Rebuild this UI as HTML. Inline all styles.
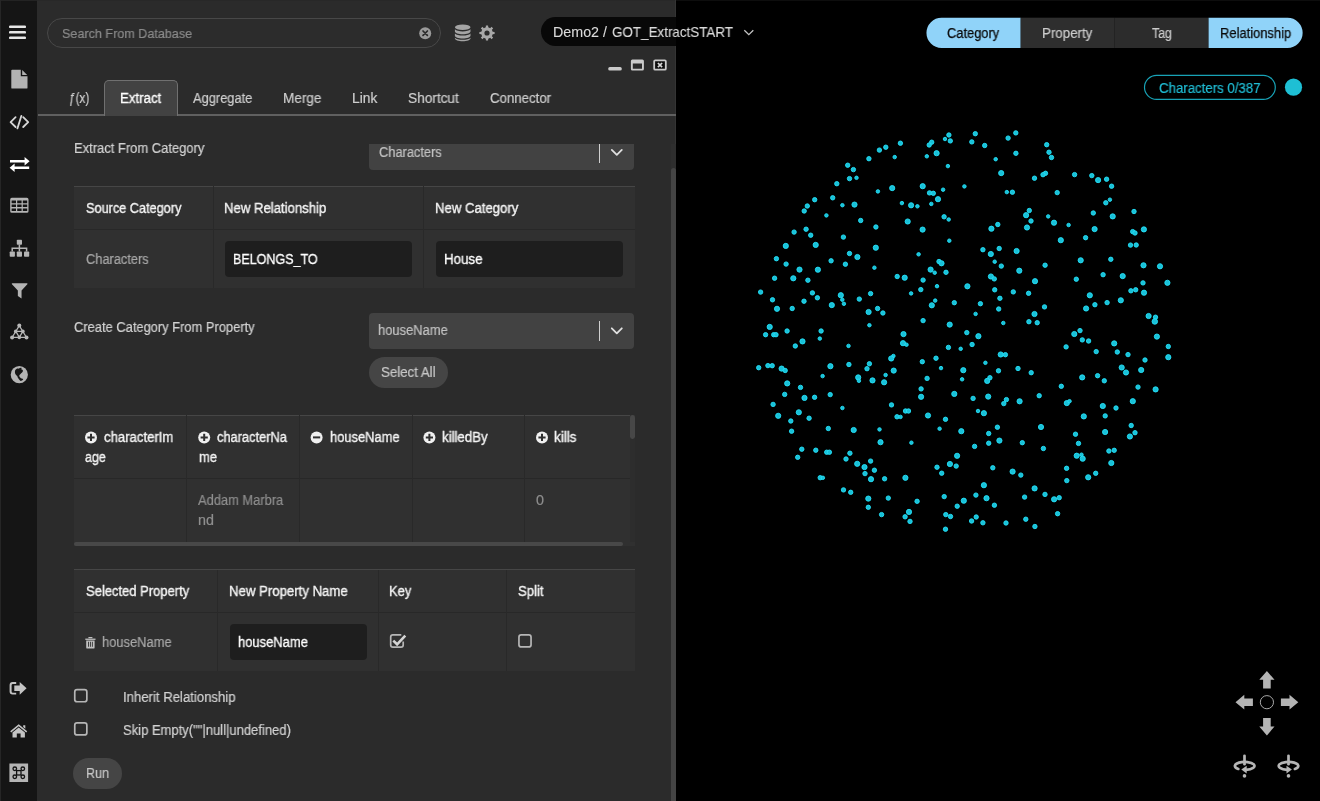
<!DOCTYPE html>
<html lang="en">
<head>
<meta charset="utf-8">
<title>Extract</title>
<style>
*{box-sizing:border-box;margin:0;padding:0}
html,body{width:1320px;height:801px;overflow:hidden;background:#000;}
body{position:relative;font-family:"Liberation Sans",sans-serif;font-size:13px;color:#d4d4d4;}
.abs{position:absolute}
.t{position:absolute;white-space:nowrap;line-height:16px;font-size:13px;-webkit-text-stroke:0.2px currentColor;will-change:transform;transform-origin:0 50%}
#side{position:absolute;left:0;top:0;width:36.8px;height:801px;background:#151515}
#panel{position:absolute;left:37px;top:0;width:639px;height:801px;background:#2b2b2b}
#graph{position:absolute;left:676px;top:0;width:644px;height:801px;background:#000}
.ico{position:absolute;fill:#b4b4b4}
/* top bar */
#search{position:absolute;left:47px;top:17.7px;width:394px;height:30px;border:1px solid #484848;border-radius:15px;background:#2c2c2c}
#title{position:absolute;left:541.4px;top:16.8px;width:134.6px;height:28.8px;border-radius:14.4px 0 0 14.4px;background:#080808}
/* tabs */
#tabline{position:absolute;left:38px;top:114.2px;width:638px;height:1.8px;background:#606060}
#tabact{position:absolute;left:104px;top:79.9px;width:73.6px;height:36.1px;background:#424242;border:1.1px solid #707070;border-bottom:none;border-radius:5px 5px 0 0}
.tab{color:#cfcfcf}
/* form */
.sel{position:absolute;left:369.3px;width:264.3px;height:36px;background:#424242;border-radius:4px}
.sel .sep{position:absolute;left:229.5px;top:8px;width:1px;height:20.5px;background:#d0d0d0}
.tbl{position:absolute;left:74px;width:560.8px;background:#303030}
.hl{position:absolute;height:1px;background:#424242}
.vl{position:absolute;width:1.1px;background:#292929}
.inp{position:absolute;height:36px;background:#1e1e1e;border-radius:4px}
.btn{position:absolute;height:31px;border-radius:16px;background:#454545}
.cb{position:absolute;width:14.2px;height:14px;border:1.7px solid #b6b6b6;border-radius:3.4px}
.w{color:#fff}.h{color:#f0f0f0}.g{color:#a8a8a8}.l{color:#d0d0d0}
</style>
</head>
<body>
<div id="graph"></div>
<div id="panel"></div>
<div id="side"></div>
<!-- edge lines -->
<div class="abs" style="left:0;top:0;width:37px;height:1px;background:#232323"></div>
<div class="abs" style="left:37px;top:0;width:639px;height:1px;background:#282828"></div>
<div class="abs" style="left:676px;top:0;width:644px;height:1px;background:#0d0d0d"></div>
<div class="abs" style="left:0;top:0;width:1px;height:801px;background:#262626"></div>
<div class="abs" style="left:675px;top:0;width:1px;height:801px;background:#343434"></div>
<div id="search"></div>
<div id="title"></div>
<div id="tabline"></div>
<div id="tabact"></div>
<div class="sel" style="top:143.8px;height:26px;border-radius:0 0 4px 4px"><div class="sep" style="top:0;height:19px"></div></div>
<div class="tbl" style="top:186px;height:102px"></div>
<div class="hl" style="left:74px;top:185.9px;width:560.8px;background:#464646"></div>
<div class="hl" style="left:74px;top:229px;width:560.8px;background:#282828"></div>
<div class="vl" style="left:212.8px;top:186px;height:102px"></div>
<div class="vl" style="left:423.3px;top:186px;height:102px"></div>
<div class="inp" style="left:225px;top:241px;width:187px"></div>
<div class="inp" style="left:436px;top:241px;width:187px"></div>
<div class="sel" style="top:312.5px"><div class="sep"></div></div>
<div class="btn" style="left:368.5px;top:356.8px;width:79.5px;height:31.2px"></div>
<div class="tbl" style="top:415px;height:126.8px"></div>
<div class="hl" style="left:74px;top:414.8px;width:556.5px;background:#464646"></div>
<div class="hl" style="left:74px;top:477.5px;width:556.5px;background:#282828"></div>
<div class="vl" style="left:186.4px;top:415px;height:127px"></div>
<div class="vl" style="left:299.1px;top:415px;height:127px"></div>
<div class="vl" style="left:411.8px;top:415px;height:127px"></div>
<div class="vl" style="left:524.4px;top:415px;height:127px"></div>
<div class="abs" style="left:630px;top:415px;width:4.8px;height:127px;background:#2d2d2d"></div>
<div class="abs" style="left:630px;top:415px;width:4.7px;height:24px;background:#474747;border-radius:2.4px"></div>
<div class="abs" style="left:74px;top:541.8px;width:560.8px;height:4.7px;background:#303030"></div>
<div class="abs" style="left:74px;top:541.8px;width:548.7px;height:4.7px;background:#484848;border-radius:2.4px"></div>
<div class="tbl" style="top:569px;height:102.3px"></div>
<div class="hl" style="left:74px;top:568.8px;width:560.8px;background:#464646"></div>
<div class="hl" style="left:74px;top:612px;width:560.8px;background:#282828"></div>
<div class="vl" style="left:217px;top:570px;height:101px"></div>
<div class="vl" style="left:378px;top:570px;height:101px"></div>
<div class="vl" style="left:506px;top:570px;height:101px"></div>
<div class="inp" style="left:229.8px;top:624.2px;width:136.8px;height:35.6px"></div>
<div class="abs" style="left:671px;top:143.8px;width:5px;height:658px;background:#2e2e2e"></div>
<div class="abs" style="left:671px;top:167.7px;width:5px;height:640px;background:#444;border-radius:2.5px"></div>
<div class="btn" style="left:73px;top:758px;width:49px"></div>

<!-- icons overlay -->
<svg class="abs" style="left:0;top:0" width="676" height="801" viewBox="0 0 676 801">
 <!-- hamburger -->
 <g fill="#e6e6e6"><rect x="9" y="25.4" width="17" height="2.7" rx="1.2"/><rect x="9" y="30.9" width="17" height="2.7" rx="1.2"/><rect x="9" y="36.4" width="17" height="2.7" rx="1.2"/></g>
 <!-- file -->
 <g fill="#b2b2b2"><path d="M12.2 69.7h8.6v6.6h6.7v11.4a.9.9 0 0 1-.9.9H12.2a.9.9 0 0 1-.9-.9V70.6a.9.9 0 0 1 .9-.9z"/><path d="M22.2 70l5 5h-5z"/></g>
 <!-- code -->
 <g fill="none" stroke="#d6d6d6" stroke-width="1.8" stroke-linecap="round" stroke-linejoin="round"><path d="M15.6 117.2l-5 4.9 5 4.9"/><path d="M23.2 117.2l5 4.9-5 4.9"/><path d="M21.4 115.8l-4 12.6"/></g>
 <!-- exchange -->
 <g fill="#fff"><path d="M10 159.9h14.6v-2.9l5 4.2-5 4.2v-2.9H10z"/><path d="M29.2 166.4H14.6v-2.9l-5 4.2 5 4.2v-2.9h14.6z"/></g>
 <!-- table -->
 <path fill="#b4b4b4" fill-rule="evenodd" d="M11.8 197.8h15.1a1.6 1.6 0 0 1 1.6 1.6v11.8a1.6 1.6 0 0 1-1.6 1.6H11.8a1.6 1.6 0 0 1-1.6-1.6v-11.8a1.6 1.6 0 0 1 1.6-1.6z M11.6 200.6v2.6h4.4v-2.6z M17.2 200.6v2.6h4.4v-2.6z M22.8 200.6v2.6h4.4v-2.6z M11.6 204.5v2.6h4.4v-2.6z M17.2 204.5v2.6h4.4v-2.6z M22.8 204.5v2.6h4.4v-2.6z M11.6 208.4v2.6h4.4v-2.6z M17.2 208.4v2.6h4.4v-2.6z M22.8 208.4v2.6h4.4v-2.6z"/>
 <!-- sitemap -->
 <g fill="#b4b4b4"><rect x="16.8" y="239.7" width="5.2" height="5" rx=".8"/><rect x="9.7" y="251.4" width="5.2" height="5.3" rx=".8"/><rect x="16.8" y="251.4" width="5.2" height="5.3" rx=".8"/><rect x="24" y="251.4" width="5.2" height="5.3" rx=".8"/><path d="M18.65 244.5h1.5v2.9h7.2v4.1h-1.5v-2.6h-5.7v2.6h-1.5v-2.6h-5.7v2.6h-1.5v-4.1h7.2z"/></g>
 <!-- filter -->
 <path fill="#b4b4b4" d="M12.2 283.2h14.7a.6.6 0 0 1 .45 1l-5.8 6.3v8.1l-3.7-2.7v-5.4l-5.9-6.3a.6.6 0 0 1 .25-1z"/>
 <!-- network -->
 <g stroke="#b8b8b8" stroke-width="1.25" fill="none"><path d="M19.3 325.6L12.2 337.3H26.4z"/><path d="M15.8 331.4H22.9L19.3 337.3z"/></g>
 <g fill="#b8b8b8"><circle cx="19.3" cy="325.4" r="2"/><circle cx="12.1" cy="337.4" r="2"/><circle cx="26.5" cy="337.4" r="2"/><circle cx="15.7" cy="331.4" r="1.8"/><circle cx="22.9" cy="331.4" r="1.8"/><circle cx="19.3" cy="337.4" r="1.8"/></g>
 <!-- globe -->
 <circle cx="19.3" cy="374.7" r="8.6" fill="#b4b4b4"/>
 <path fill="#161616" d="M15.2 370.2c1-1.6 2.6-2 3.6-1.4.8-.9 2.3-1.3 3-.6l-1.2 1.2c1.6-.4 2.7.8 2.2 2-.8 1.4-2.4 2.4-3.300 3.6-.6 1 .3 2.500 1.500 3.300.9.5 1.800.2 2.200.9-.6.9-1.600 1.600-2.600 1.700-1.400-1.100-2.900-3-3.400-5-.8-.6-1.900-1.700-2.200-3-.2-.900-.1-1.900.2-2.700z"/>
 <!-- sign-out -->
 <g fill="#c4c4c4"><path d="M16.200 682H12.600a3 3 0 0 0-3 3v6.600a3 3 0 0 0 3 3h3.600v-1.900H12.900a1.300 1.300 0 0 1-1.300-1.300v-6.200a1.300 1.300 0 0 1 1.300-1.300h3.300z"/><path d="M14.300 685.500h5.400v-3.600l6.900 6.400-6.900 6.400v-3.600h-5.400z"/></g>
 <!-- home -->
 <g fill="#c4c4c4"><path d="M18.700 724.200l8.500 7-1 1.200-7.500-6.200-7.500 6.200-1-1.200z"/><path d="M23.200 725.200h2.100v3.600l-2.100-1.800z"/><path d="M18.700 727.400l6.200 5.100v4.900h-4.300v-3.900h-3.800v3.900h-4.300v-4.900z"/></g>
 <!-- cmd -->
 <rect x="9.400" y="763.500" width="18.700" height="18.500" fill="#b4b4b4"/>
 <g fill="none" stroke="#111" stroke-width="1.300"><rect x="16.600" y="770.600" width="4.400" height="4.400"/><circle cx="14.800" cy="768.800" r="1.800"/><circle cx="22.800" cy="768.800" r="1.800"/><circle cx="14.800" cy="776.800" r="1.800"/><circle cx="22.800" cy="776.800" r="1.800"/></g>

 <!-- search clear -->
 <circle cx="425.200" cy="33.200" r="6" fill="#9a9a9a"/>
 <path d="M423 31l4.400 4.400M427.400 31l-4.400 4.400" stroke="#2b2b2b" stroke-width="1.700" stroke-linecap="round"/>
 <!-- database -->
 <g fill="#a4a4a4"><ellipse cx="462.700" cy="27.200" rx="7.800" ry="2.800"/>
 <path d="M454.900 29.300c1.300 1.400 4.300 2.100 7.800 2.100s6.500-.7 7.800-2.100v2.300c0 1.500-3.500 2.700-7.800 2.700s-7.800-1.200-7.800-2.700z"/>
 <path d="M454.900 33.500c1.300 1.400 4.300 2.100 7.800 2.100s6.500-.7 7.800-2.100v2.300c0 1.500-3.500 2.700-7.800 2.700s-7.800-1.200-7.800-2.700z"/>
 <path d="M454.900 37.700c1.300 1.400 4.300 2.100 7.800 2.100s6.500-.7 7.800-2.100v.9c0 1.500-3.500 2.700-7.800 2.700s-7.800-1.200-7.800-2.700z"/></g>
 <!-- gear -->
 <path fill="#a8a8a8" fill-rule="evenodd" d="M492.670 31.780 L494.620 31.920 L494.620 34.080 L492.670 34.220 L491.870 36.150 L493.160 37.620 L491.620 39.160 L490.150 37.870 L488.220 38.670 L488.080 40.620 L485.920 40.620 L485.780 38.670 L483.850 37.870 L482.380 39.160 L480.840 37.620 L482.130 36.150 L481.330 34.220 L479.380 34.080 L479.380 31.920 L481.330 31.780 L482.130 29.850 L480.840 28.380 L482.380 26.840 L483.850 28.130 L485.780 27.330 L485.920 25.380 L488.080 25.380 L488.220 27.330 L490.150 28.130 L491.620 26.840 L493.160 28.380 L491.870 29.850Z M484.400 33.000 a2.600 2.600 0 1 0 5.200 0 a2.600 2.600 0 1 0 -5.200 0Z"/>
 <!-- window controls -->
 <rect x="608.2" y="67" width="13.6" height="3.6" rx="1.7" fill="#cacaca"/>
 <path fill="#cacaca" fill-rule="evenodd" d="M632.4 59.4h10a1.500 1.500 0 0 1 1.500 1.500v8.200a1.500 1.500 0 0 1-1.500 1.500h-10a1.500 1.500 0 0 1-1.500-1.500v-8.200a1.500 1.500 0 0 1 1.500-1.500z M632.800 63.500v5.200h9.200v-5.200z"/>
 <rect x="654.2" y="60.300" width="11.600" height="9.400" rx="1" fill="#0c0c0c" stroke="#cacaca" stroke-width="1.800"/>
 <path d="M657.900 63l4.200 4.200M662.100 63l-4.200 4.200" stroke="#d8d8d8" stroke-width="1.700"/>
 <!-- plus/minus circle icons -->
 <g fill="#f0f0f0"><circle cx="91" cy="437.400" r="6"/><circle cx="204.200" cy="437.400" r="6"/><circle cx="316.600" cy="437.400" r="6"/><circle cx="429.400" cy="437.400" r="6"/><circle cx="542" cy="437.400" r="6"/></g>
 <g stroke="#303030" stroke-width="2" stroke-linecap="butt"><path d="M87.400 437.400h7.200M91 433.800v7.200"/><path d="M200.600 437.400h7.200M204.200 433.800v7.200"/><path d="M313 437.400h7.200"/><path d="M425.800 437.400h7.200M429.400 433.800v7.200"/><path d="M538.400 437.400h7.200M542 433.800v7.200"/></g>
 <!-- trash -->
 <g fill="#c0c0c0"><path d="M85.300 638.600h10.200v1.300h-10.200z"/><path d="M88.400 637h4v1.200h-4z" /><path fill-rule="evenodd" d="M86.200 640.400h8.400v7a1.200 1.200 0 0 1-1.200 1.200h-6a1.200 1.200 0 0 1-1.200-1.200z M88 641.800v5h.9v-5z M89.950 641.800v5h.9v-5z M91.900 641.800v5h.9v-5z"/></g>
 <!-- unchecked boxes -->
 <g fill="none" stroke="#b6b6b6" stroke-width="1.7"><rect x="518.95" y="634.85" width="12.1" height="12.1" rx="2.3"/><rect x="74.75" y="689.65" width="12.1" height="12.1" rx="2.3"/><rect x="74.75" y="722.85" width="12.1" height="12.1" rx="2.3"/></g>
 <!-- checked box -->
 <path d="M401.300 634.850H392.900a2.200 2.200 0 0 0-2.200 2.200v7.900a2.200 2.200 0 0 0 2.200 2.200h8.100a2.200 2.200 0 0 0 2.200-2.200v-3.400" fill="none" stroke="#b6b6b6" stroke-width="1.700"/>
 <path d="M393.300 640.600l3.800 3.700 8.200-8.600" fill="none" stroke="#d4d4d4" stroke-width="2.600"/>
 <!-- select chevrons -->
 <g fill="none" stroke="#e0e0e0" stroke-width="1.800" stroke-linecap="round" stroke-linejoin="round"><path d="M611.800 149.900l5 5 5-5"/><path d="M611.800 328.300l5 5 5-5"/></g>
</svg>
<!-- graph overlay -->
<svg class="abs" style="left:676px;top:0" width="644" height="801" viewBox="676 0 644 801">
 <!-- title chevron -->
 <path d="M744.3 30.2l4.5 4.4 4.5-4.4" fill="none" stroke="#c4c4c4" stroke-width="1.3"/>
 <!-- toggles -->
 <path d="M941.600 17.700H1020.700V48H941.600a15.150 15.150 0 0 1 0-30.300z" fill="#90d3f9"/>
 <rect x="1020.700" y="17.700" width="94" height="30.300" fill="#2e2e2e"/>
 <rect x="1114.700" y="17.700" width="94" height="30.300" fill="#2c2c2c"/>
 <path d="M1208.600 17.700H1287.500a15.150 15.150 0 0 1 0 30.300H1208.600z" fill="#90d3f9"/>
 <!-- badge -->
 <rect x="1144.500" y="75.300" width="130.800" height="24.100" rx="12.050" fill="none" stroke="#18a2b6" stroke-width="1.200"/>
 <circle cx="1293.500" cy="87.200" r="8.600" fill="#1ebfd4"/>
 <!-- dots -->
 <g fill="#1ac0d8" stroke="#23e2f8" stroke-width="0.9">
  <circle cx="885.8" cy="147.2" r="2.20"/>
  <circle cx="879.4" cy="150.1" r="2.20"/>
  <circle cx="868.9" cy="158.7" r="2.20"/>
  <circle cx="847.7" cy="165.2" r="2.20"/>
  <circle cx="853.4" cy="169.6" r="2.20"/>
  <circle cx="849.5" cy="178.6" r="2.20"/>
  <circle cx="856.5" cy="177.8" r="1.75"/>
  <circle cx="836.8" cy="183.7" r="2.20"/>
  <circle cx="877.9" cy="191.4" r="1.75"/>
  <circle cx="832.7" cy="197.8" r="2.20"/>
  <circle cx="814.7" cy="199.7" r="2.20"/>
  <circle cx="842.4" cy="205.2" r="1.75"/>
  <circle cx="854.5" cy="204.6" r="2.60"/>
  <circle cx="807.3" cy="206.0" r="2.20"/>
  <circle cx="804.2" cy="211.0" r="2.20"/>
  <circle cx="826.4" cy="215.4" r="1.75"/>
  <circle cx="900.4" cy="143.2" r="2.20"/>
  <circle cx="894.7" cy="157.1" r="1.75"/>
  <circle cx="931.7" cy="142.2" r="2.20"/>
  <circle cx="929.2" cy="145.0" r="2.20"/>
  <circle cx="936.6" cy="153.2" r="2.60"/>
  <circle cx="926.8" cy="156.3" r="1.75"/>
  <circle cx="948.9" cy="135.0" r="2.20"/>
  <circle cx="945.0" cy="139.0" r="1.75"/>
  <circle cx="950.3" cy="140.9" r="2.20"/>
  <circle cx="947.9" cy="166.1" r="1.75"/>
  <circle cx="975.3" cy="133.7" r="2.20"/>
  <circle cx="971.8" cy="141.9" r="2.20"/>
  <circle cx="984.7" cy="145.5" r="2.20"/>
  <circle cx="1015.8" cy="132.9" r="2.20"/>
  <circle cx="1008.1" cy="138.1" r="2.20"/>
  <circle cx="1015.9" cy="153.3" r="2.20"/>
  <circle cx="995.7" cy="159.2" r="1.75"/>
  <circle cx="1001.2" cy="173.1" r="2.60"/>
  <circle cx="892.2" cy="188.1" r="2.60"/>
  <circle cx="922.7" cy="186.2" r="2.60"/>
  <circle cx="943.1" cy="189.7" r="1.75"/>
  <circle cx="964.4" cy="186.4" r="1.75"/>
  <circle cx="929.5" cy="192.9" r="2.20"/>
  <circle cx="933.3" cy="193.3" r="2.20"/>
  <circle cx="938.0" cy="199.2" r="2.60"/>
  <circle cx="931.3" cy="203.9" r="1.75"/>
  <circle cx="901.9" cy="203.1" r="1.75"/>
  <circle cx="911.1" cy="205.3" r="2.60"/>
  <circle cx="917.4" cy="206.3" r="1.75"/>
  <circle cx="1006.8" cy="192.1" r="1.75"/>
  <circle cx="1012.4" cy="192.2" r="2.20"/>
  <circle cx="1026.1" cy="215.2" r="2.60"/>
  <circle cx="1029.3" cy="210.5" r="2.20"/>
  <circle cx="944.1" cy="216.8" r="2.20"/>
  <circle cx="948.7" cy="219.5" r="1.75"/>
  <circle cx="1046.7" cy="144.7" r="2.20"/>
  <circle cx="1049.0" cy="152.2" r="2.20"/>
  <circle cx="1051.5" cy="157.5" r="2.20"/>
  <circle cx="1045.5" cy="173.3" r="2.20"/>
  <circle cx="1043.0" cy="174.7" r="2.20"/>
  <circle cx="1034.5" cy="178.2" r="2.20"/>
  <circle cx="1074.6" cy="174.6" r="2.20"/>
  <circle cx="1091.8" cy="175.6" r="2.20"/>
  <circle cx="1098.1" cy="180.1" r="2.60"/>
  <circle cx="1106.6" cy="179.2" r="2.20"/>
  <circle cx="1111.6" cy="186.2" r="2.20"/>
  <circle cx="1057.2" cy="192.6" r="2.20"/>
  <circle cx="1109.9" cy="199.7" r="1.75"/>
  <circle cx="1105.8" cy="202.8" r="2.20"/>
  <circle cx="1048.2" cy="216.4" r="1.75"/>
  <circle cx="1093.3" cy="213.0" r="2.20"/>
  <circle cx="1112.7" cy="216.4" r="2.60"/>
  <circle cx="1134.0" cy="211.5" r="2.20"/>
  <circle cx="860.7" cy="220.5" r="2.20"/>
  <circle cx="875.9" cy="227.0" r="2.20"/>
  <circle cx="794.1" cy="232.1" r="2.20"/>
  <circle cx="806.1" cy="229.2" r="2.20"/>
  <circle cx="810.7" cy="235.2" r="2.20"/>
  <circle cx="843.4" cy="237.1" r="2.20"/>
  <circle cx="785.8" cy="245.9" r="2.60"/>
  <circle cx="815.7" cy="244.9" r="2.60"/>
  <circle cx="875.8" cy="247.7" r="2.60"/>
  <circle cx="849.5" cy="253.5" r="2.20"/>
  <circle cx="857.4" cy="257.0" r="2.60"/>
  <circle cx="776.4" cy="258.7" r="2.20"/>
  <circle cx="831.1" cy="260.8" r="2.20"/>
  <circle cx="845.4" cy="264.2" r="2.20"/>
  <circle cx="786.1" cy="264.1" r="2.20"/>
  <circle cx="799.5" cy="269.6" r="2.60"/>
  <circle cx="817.9" cy="269.7" r="2.60"/>
  <circle cx="874.4" cy="267.7" r="1.75"/>
  <circle cx="774.6" cy="278.2" r="2.20"/>
  <circle cx="793.3" cy="278.3" r="2.60"/>
  <circle cx="807.9" cy="280.2" r="2.20"/>
  <circle cx="760.6" cy="292.1" r="2.20"/>
  <circle cx="812.4" cy="292.9" r="2.20"/>
  <circle cx="817.4" cy="297.8" r="2.20"/>
  <circle cx="840.8" cy="295.2" r="2.60"/>
  <circle cx="842.3" cy="299.7" r="1.75"/>
  <circle cx="843.9" cy="303.8" r="1.75"/>
  <circle cx="870.6" cy="293.6" r="2.20"/>
  <circle cx="859.3" cy="299.1" r="2.20"/>
  <circle cx="772.5" cy="299.8" r="2.20"/>
  <circle cx="804.0" cy="301.2" r="2.20"/>
  <circle cx="831.8" cy="305.1" r="2.60"/>
  <circle cx="777.0" cy="308.8" r="2.60"/>
  <circle cx="792.2" cy="308.5" r="2.20"/>
  <circle cx="877.6" cy="308.5" r="2.20"/>
  <circle cx="868.6" cy="312.0" r="2.60"/>
  <circle cx="882.9" cy="313.0" r="2.20"/>
  <circle cx="907.7" cy="221.5" r="2.60"/>
  <circle cx="922.6" cy="229.6" r="2.60"/>
  <circle cx="997.8" cy="224.5" r="2.20"/>
  <circle cx="991.4" cy="228.7" r="2.60"/>
  <circle cx="1027.0" cy="227.5" r="2.60"/>
  <circle cx="949.3" cy="240.7" r="1.75"/>
  <circle cx="918.6" cy="254.3" r="1.75"/>
  <circle cx="982.9" cy="249.7" r="2.20"/>
  <circle cx="999.2" cy="248.5" r="2.20"/>
  <circle cx="990.8" cy="254.0" r="2.60"/>
  <circle cx="1016.6" cy="251.0" r="2.60"/>
  <circle cx="994.7" cy="261.7" r="1.75"/>
  <circle cx="1001.3" cy="266.1" r="2.20"/>
  <circle cx="939.0" cy="261.5" r="2.20"/>
  <circle cx="941.5" cy="263.3" r="2.60"/>
  <circle cx="930.6" cy="269.6" r="2.60"/>
  <circle cx="934.7" cy="272.7" r="1.75"/>
  <circle cx="946.0" cy="272.3" r="2.20"/>
  <circle cx="1019.3" cy="270.7" r="2.60"/>
  <circle cx="897.2" cy="276.5" r="2.20"/>
  <circle cx="904.7" cy="277.7" r="2.60"/>
  <circle cx="923.1" cy="280.1" r="2.20"/>
  <circle cx="990.9" cy="276.5" r="2.60"/>
  <circle cx="994.3" cy="278.9" r="2.20"/>
  <circle cx="937.0" cy="286.2" r="1.75"/>
  <circle cx="967.4" cy="286.3" r="2.60"/>
  <circle cx="920.8" cy="289.6" r="2.20"/>
  <circle cx="911.1" cy="293.4" r="1.75"/>
  <circle cx="994.7" cy="289.8" r="2.20"/>
  <circle cx="1013.3" cy="291.9" r="2.20"/>
  <circle cx="1028.6" cy="293.3" r="2.20"/>
  <circle cx="999.9" cy="298.3" r="2.20"/>
  <circle cx="935.2" cy="300.6" r="1.75"/>
  <circle cx="931.8" cy="305.3" r="2.60"/>
  <circle cx="954.3" cy="302.7" r="2.20"/>
  <circle cx="980.4" cy="303.7" r="2.20"/>
  <circle cx="998.7" cy="309.0" r="2.20"/>
  <circle cx="975.6" cy="313.9" r="1.75"/>
  <circle cx="1031.0" cy="221.0" r="2.20"/>
  <circle cx="1054.0" cy="222.7" r="2.60"/>
  <circle cx="1068.6" cy="225.0" r="1.75"/>
  <circle cx="1094.6" cy="229.1" r="2.60"/>
  <circle cx="1085.6" cy="237.7" r="2.20"/>
  <circle cx="1060.8" cy="240.2" r="2.60"/>
  <circle cx="1132.7" cy="231.6" r="2.20"/>
  <circle cx="1135.0" cy="233.0" r="2.20"/>
  <circle cx="1143.9" cy="229.4" r="2.60"/>
  <circle cx="1130.5" cy="245.1" r="2.20"/>
  <circle cx="1136.2" cy="245.0" r="2.20"/>
  <circle cx="1080.7" cy="260.3" r="2.60"/>
  <circle cx="1110.8" cy="259.3" r="2.20"/>
  <circle cx="1045.1" cy="265.2" r="2.20"/>
  <circle cx="1143.5" cy="265.3" r="2.60"/>
  <circle cx="1160.0" cy="266.3" r="2.60"/>
  <circle cx="1103.1" cy="274.7" r="2.20"/>
  <circle cx="1122.7" cy="276.1" r="2.60"/>
  <circle cx="1076.3" cy="279.2" r="2.20"/>
  <circle cx="1035.0" cy="281.2" r="2.60"/>
  <circle cx="1143.0" cy="282.9" r="2.20"/>
  <circle cx="1167.4" cy="282.8" r="2.60"/>
  <circle cx="1130.9" cy="290.8" r="2.20"/>
  <circle cx="1135.7" cy="289.8" r="2.20"/>
  <circle cx="1144.0" cy="292.7" r="2.60"/>
  <circle cx="1089.8" cy="295.3" r="2.60"/>
  <circle cx="1120.8" cy="300.3" r="2.60"/>
  <circle cx="1107.1" cy="302.6" r="2.20"/>
  <circle cx="1094.9" cy="304.7" r="2.20"/>
  <circle cx="1086.1" cy="308.5" r="2.60"/>
  <circle cx="1044.5" cy="306.9" r="2.20"/>
  <circle cx="1034.5" cy="314.0" r="2.60"/>
  <circle cx="1148.6" cy="316.0" r="2.60"/>
  <circle cx="1155.5" cy="317.2" r="2.20"/>
  <circle cx="769.7" cy="326.9" r="2.60"/>
  <circle cx="765.6" cy="334.7" r="2.20"/>
  <circle cx="773.7" cy="334.7" r="2.20"/>
  <circle cx="776.0" cy="334.7" r="2.20"/>
  <circle cx="787.1" cy="331.0" r="2.20"/>
  <circle cx="821.1" cy="331.0" r="2.20"/>
  <circle cx="819.8" cy="338.6" r="1.75"/>
  <circle cx="869.4" cy="325.2" r="1.75"/>
  <circle cx="802.5" cy="341.4" r="2.60"/>
  <circle cx="795.3" cy="346.0" r="2.20"/>
  <circle cx="848.5" cy="345.9" r="1.75"/>
  <circle cx="758.7" cy="367.7" r="2.20"/>
  <circle cx="767.9" cy="365.6" r="2.20"/>
  <circle cx="772.2" cy="365.7" r="2.20"/>
  <circle cx="781.6" cy="368.6" r="2.60"/>
  <circle cx="785.2" cy="370.5" r="2.20"/>
  <circle cx="830.4" cy="366.2" r="2.60"/>
  <circle cx="848.9" cy="364.5" r="2.20"/>
  <circle cx="869.4" cy="363.8" r="2.20"/>
  <circle cx="867.0" cy="368.7" r="2.20"/>
  <circle cx="822.6" cy="376.1" r="1.75"/>
  <circle cx="858.2" cy="377.4" r="2.60"/>
  <circle cx="858.9" cy="380.8" r="1.75"/>
  <circle cx="885.6" cy="375.0" r="1.75"/>
  <circle cx="872.5" cy="380.4" r="2.60"/>
  <circle cx="884.1" cy="382.3" r="2.60"/>
  <circle cx="787.2" cy="383.4" r="2.60"/>
  <circle cx="800.5" cy="387.4" r="2.20"/>
  <circle cx="784.7" cy="394.4" r="2.20"/>
  <circle cx="830.2" cy="394.6" r="2.20"/>
  <circle cx="804.5" cy="397.9" r="2.60"/>
  <circle cx="814.6" cy="397.3" r="2.20"/>
  <circle cx="773.1" cy="404.4" r="2.20"/>
  <circle cx="842.4" cy="408.0" r="1.75"/>
  <circle cx="798.8" cy="412.3" r="2.60"/>
  <circle cx="778.2" cy="415.8" r="2.60"/>
  <circle cx="809.1" cy="418.2" r="2.20"/>
  <circle cx="923.1" cy="320.6" r="2.20"/>
  <circle cx="949.7" cy="324.6" r="2.60"/>
  <circle cx="1003.3" cy="323.0" r="1.75"/>
  <circle cx="1028.9" cy="321.7" r="2.20"/>
  <circle cx="903.5" cy="334.1" r="2.60"/>
  <circle cx="966.8" cy="332.6" r="2.20"/>
  <circle cx="978.4" cy="336.2" r="2.60"/>
  <circle cx="903.0" cy="343.2" r="2.60"/>
  <circle cx="906.5" cy="344.7" r="1.75"/>
  <circle cx="972.1" cy="344.5" r="2.20"/>
  <circle cx="948.4" cy="347.4" r="2.20"/>
  <circle cx="960.7" cy="348.8" r="1.75"/>
  <circle cx="893.4" cy="356.0" r="1.75"/>
  <circle cx="891.2" cy="358.5" r="2.60"/>
  <circle cx="1000.7" cy="354.5" r="2.60"/>
  <circle cx="1005.4" cy="354.7" r="2.20"/>
  <circle cx="936.0" cy="358.2" r="2.20"/>
  <circle cx="922.3" cy="361.7" r="2.20"/>
  <circle cx="985.4" cy="362.8" r="1.75"/>
  <circle cx="941.0" cy="368.1" r="1.75"/>
  <circle cx="893.7" cy="370.6" r="2.60"/>
  <circle cx="963.3" cy="370.2" r="2.60"/>
  <circle cx="998.5" cy="370.8" r="2.20"/>
  <circle cx="1018.0" cy="368.5" r="2.20"/>
  <circle cx="927.1" cy="378.4" r="2.20"/>
  <circle cx="962.1" cy="379.3" r="1.75"/>
  <circle cx="989.9" cy="377.7" r="2.20"/>
  <circle cx="987.2" cy="380.9" r="2.60"/>
  <circle cx="921.1" cy="388.9" r="2.20"/>
  <circle cx="921.1" cy="396.8" r="2.60"/>
  <circle cx="954.3" cy="393.9" r="2.60"/>
  <circle cx="973.1" cy="398.4" r="2.20"/>
  <circle cx="988.2" cy="396.6" r="2.60"/>
  <circle cx="1006.4" cy="399.6" r="2.20"/>
  <circle cx="1003.8" cy="403.6" r="2.20"/>
  <circle cx="1019.6" cy="401.3" r="2.60"/>
  <circle cx="891.5" cy="404.9" r="2.20"/>
  <circle cx="905.5" cy="411.0" r="2.20"/>
  <circle cx="908.5" cy="411.0" r="2.20"/>
  <circle cx="978.0" cy="411.0" r="1.75"/>
  <circle cx="983.9" cy="413.2" r="2.60"/>
  <circle cx="928.0" cy="415.5" r="2.60"/>
  <circle cx="897.0" cy="416.8" r="2.20"/>
  <circle cx="900.5" cy="416.9" r="1.75"/>
  <circle cx="945.5" cy="419.3" r="2.20"/>
  <circle cx="1037.2" cy="322.7" r="2.20"/>
  <circle cx="1080.0" cy="330.6" r="2.20"/>
  <circle cx="1074.3" cy="334.0" r="2.60"/>
  <circle cx="1156.9" cy="336.6" r="2.60"/>
  <circle cx="1082.3" cy="339.9" r="2.20"/>
  <circle cx="1088.6" cy="341.0" r="2.20"/>
  <circle cx="1114.2" cy="343.4" r="2.60"/>
  <circle cx="1066.1" cy="346.9" r="2.20"/>
  <circle cx="1168.3" cy="346.5" r="2.20"/>
  <circle cx="1096.2" cy="351.6" r="2.20"/>
  <circle cx="1117.3" cy="352.0" r="2.20"/>
  <circle cx="1128.0" cy="354.6" r="2.20"/>
  <circle cx="1168.3" cy="357.2" r="2.60"/>
  <circle cx="1145.0" cy="360.0" r="2.20"/>
  <circle cx="1121.7" cy="367.5" r="2.60"/>
  <circle cx="1126.0" cy="372.5" r="2.60"/>
  <circle cx="1141.2" cy="370.0" r="2.60"/>
  <circle cx="1031.2" cy="372.7" r="2.20"/>
  <circle cx="1082.2" cy="377.4" r="2.60"/>
  <circle cx="1097.6" cy="375.7" r="2.20"/>
  <circle cx="1104.3" cy="380.8" r="2.20"/>
  <circle cx="1061.3" cy="386.3" r="2.20"/>
  <circle cx="1138.0" cy="387.1" r="2.20"/>
  <circle cx="1155.6" cy="389.4" r="2.60"/>
  <circle cx="1039.2" cy="395.7" r="2.20"/>
  <circle cx="1066.8" cy="403.1" r="2.60"/>
  <circle cx="1069.5" cy="401.2" r="1.75"/>
  <circle cx="1132.8" cy="401.2" r="2.60"/>
  <circle cx="1102.8" cy="406.0" r="2.60"/>
  <circle cx="1116.0" cy="408.0" r="2.20"/>
  <circle cx="1083.8" cy="416.4" r="2.60"/>
  <circle cx="1105.2" cy="415.9" r="2.20"/>
  <circle cx="790.8" cy="421.0" r="2.20"/>
  <circle cx="791.6" cy="431.2" r="2.20"/>
  <circle cx="828.3" cy="428.5" r="2.20"/>
  <circle cx="853.7" cy="430.0" r="2.60"/>
  <circle cx="879.5" cy="429.4" r="1.75"/>
  <circle cx="880.5" cy="442.2" r="2.60"/>
  <circle cx="801.8" cy="449.2" r="2.20"/>
  <circle cx="815.8" cy="450.2" r="2.20"/>
  <circle cx="826.7" cy="452.2" r="2.20"/>
  <circle cx="829.4" cy="452.2" r="2.20"/>
  <circle cx="849.9" cy="453.2" r="2.20"/>
  <circle cx="797.7" cy="457.3" r="2.20"/>
  <circle cx="846.0" cy="459.0" r="2.20"/>
  <circle cx="870.6" cy="461.1" r="2.20"/>
  <circle cx="857.2" cy="463.8" r="2.60"/>
  <circle cx="864.5" cy="467.1" r="2.60"/>
  <circle cx="874.4" cy="470.2" r="2.20"/>
  <circle cx="865.0" cy="473.6" r="2.20"/>
  <circle cx="871.0" cy="479.2" r="2.60"/>
  <circle cx="884.6" cy="478.8" r="2.20"/>
  <circle cx="820.2" cy="477.7" r="2.20"/>
  <circle cx="822.9" cy="477.8" r="1.75"/>
  <circle cx="843.5" cy="489.9" r="2.20"/>
  <circle cx="850.7" cy="492.3" r="2.20"/>
  <circle cx="868.3" cy="498.6" r="2.60"/>
  <circle cx="888.3" cy="498.1" r="2.20"/>
  <circle cx="868.3" cy="507.3" r="2.20"/>
  <circle cx="939.6" cy="428.7" r="1.75"/>
  <circle cx="961.3" cy="431.2" r="2.60"/>
  <circle cx="997.4" cy="427.2" r="2.20"/>
  <circle cx="988.7" cy="433.5" r="2.20"/>
  <circle cx="911.4" cy="442.7" r="1.75"/>
  <circle cx="999.4" cy="440.6" r="2.60"/>
  <circle cx="988.7" cy="443.2" r="2.20"/>
  <circle cx="1022.3" cy="442.7" r="2.20"/>
  <circle cx="974.6" cy="446.4" r="2.20"/>
  <circle cx="957.1" cy="455.8" r="2.60"/>
  <circle cx="949.9" cy="464.0" r="2.60"/>
  <circle cx="956.2" cy="466.1" r="2.20"/>
  <circle cx="937.0" cy="467.2" r="2.20"/>
  <circle cx="941.7" cy="473.2" r="2.20"/>
  <circle cx="992.8" cy="467.8" r="2.20"/>
  <circle cx="1012.6" cy="471.6" r="2.60"/>
  <circle cx="1020.8" cy="475.1" r="2.20"/>
  <circle cx="905.4" cy="477.8" r="2.60"/>
  <circle cx="983.9" cy="485.2" r="2.60"/>
  <circle cx="944.2" cy="496.6" r="2.20"/>
  <circle cx="975.9" cy="495.1" r="2.20"/>
  <circle cx="986.5" cy="498.2" r="2.60"/>
  <circle cx="1024.6" cy="497.1" r="2.20"/>
  <circle cx="917.1" cy="501.3" r="2.20"/>
  <circle cx="963.8" cy="500.7" r="2.60"/>
  <circle cx="957.2" cy="506.2" r="2.20"/>
  <circle cx="994.4" cy="505.2" r="2.20"/>
  <circle cx="909.0" cy="511.9" r="2.60"/>
  <circle cx="1041.0" cy="427.0" r="2.60"/>
  <circle cx="1075.5" cy="434.2" r="2.20"/>
  <circle cx="1105.1" cy="432.0" r="2.60"/>
  <circle cx="1131.2" cy="425.5" r="2.20"/>
  <circle cx="1135.0" cy="432.7" r="2.20"/>
  <circle cx="1129.9" cy="436.5" r="2.60"/>
  <circle cx="1078.5" cy="443.4" r="2.20"/>
  <circle cx="1043.4" cy="448.5" r="2.20"/>
  <circle cx="1108.9" cy="451.0" r="2.20"/>
  <circle cx="1114.2" cy="450.3" r="2.20"/>
  <circle cx="1076.7" cy="455.7" r="2.60"/>
  <circle cx="1081.5" cy="454.7" r="1.75"/>
  <circle cx="1082.7" cy="458.7" r="2.60"/>
  <circle cx="1111.3" cy="463.0" r="2.60"/>
  <circle cx="1066.6" cy="468.3" r="2.20"/>
  <circle cx="1095.7" cy="473.3" r="2.20"/>
  <circle cx="1088.2" cy="477.3" r="2.60"/>
  <circle cx="1066.8" cy="480.6" r="2.20"/>
  <circle cx="1034.6" cy="488.4" r="2.60"/>
  <circle cx="1045.0" cy="494.4" r="2.20"/>
  <circle cx="1059.2" cy="497.7" r="2.20"/>
  <circle cx="1054.1" cy="499.3" r="2.60"/>
  <circle cx="881.6" cy="514.6" r="2.20"/>
  <circle cx="905.1" cy="516.8" r="2.20"/>
  <circle cx="910.0" cy="521.4" r="2.20"/>
  <circle cx="945.8" cy="514.6" r="2.20"/>
  <circle cx="950.5" cy="516.5" r="2.20"/>
  <circle cx="945.5" cy="529.2" r="2.20"/>
  <circle cx="976.2" cy="517.0" r="2.20"/>
  <circle cx="971.6" cy="521.0" r="2.20"/>
  <circle cx="982.9" cy="522.8" r="2.20"/>
  <circle cx="1006.0" cy="523.0" r="2.20"/>
  <circle cx="1025.8" cy="519.2" r="2.20"/>
  <circle cx="1034.9" cy="526.5" r="2.20"/>
  <circle cx="1057.6" cy="513.7" r="2.20"/>
  <circle cx="1154.8" cy="321.5" r="2.75"/>
 </g>
 <!-- nav arrows -->
 <g fill="#b4b4b4">
  <path d="M1266.900 671l7.600 8.800h-3.800v8.600h-7.600v-8.600h-3.800z"/>
  <path d="M1266.900 735.400l7.600-8.800h-3.800v-8.600h-7.600v8.600h-3.800z"/>
  <path d="M1235.500 702.200l8.800-7.400v3.700h8.600v7.400h-8.600v3.700z"/>
  <path d="M1298.300 702.200l-8.800-7.400v3.700h-8.600v7.400h8.600v3.700z"/>
 </g>
 <circle cx="1266.900" cy="702.200" r="6.600" fill="none" stroke="#aaa" stroke-width="1"/>
 <!-- rotate icons -->
 <g fill="none" stroke="#b6b6b6" stroke-width="2.700" stroke-linecap="round">
  <path d="M1246 769.860A9.800 4 0 1 0 1238.300 768.930"/>
  <path d="M1244.500 755.800v8.400"/>
  <path d="M1287.200 769.860A9.800 4 0 1 1 1294.900 768.930"/>
  <path d="M1288.500 755.800v8.400"/>
 </g>
 <g fill="#b6b6b6">
  <path d="M1241.300 769.600l5.400-3.900v7.700z"/>
  <path d="M1291.900 769.600l-5.400-3.900v7.700z"/>
  <circle cx="1244.500" cy="775.900" r="1.800"/>
  <circle cx="1288.500" cy="775.900" r="1.800"/>
 </g>
</svg>

<div class="t" style="left:62.40px;top:26.09px;font-size:13.60px;color:#8a8a8a;-webkit-text-stroke-width:0.20px;transform:scaleX(0.9259)">Search From Database</div>
<div class="t" style="left:552.73px;top:24.08px;font-size:14.20px;color:#dcdcdc;-webkit-text-stroke-width:0.10px;transform:scaleX(1.0072)">Demo2</div>
<div class="t" style="left:603.30px;top:24.08px;font-size:14.20px;color:#dcdcdc;-webkit-text-stroke-width:0.10px;transform:scaleX(0.9823)">/</div>
<div class="t" style="left:611.71px;top:24.08px;font-size:14.20px;color:#dcdcdc;-webkit-text-stroke-width:0.10px;transform:scaleX(0.9457)">GOT_ExtractSTART</div>
<div class="t" style="left:68.87px;top:91.02px;font-size:13.80px;color:#cfcfcf;-webkit-text-stroke-width:0.20px;transform:scaleX(0.8518)">ƒ(x)</div>
<div class="t" style="left:120.21px;top:91.02px;font-size:13.80px;color:#ffffff;-webkit-text-stroke-width:0.30px;transform:scaleX(0.9608)">Extract</div>
<div class="t" style="left:193.06px;top:91.02px;font-size:13.80px;color:#cfcfcf;-webkit-text-stroke-width:0.20px;transform:scaleX(0.9317)">Aggregate</div>
<div class="t" style="left:282.80px;top:91.02px;font-size:13.80px;color:#cfcfcf;-webkit-text-stroke-width:0.20px;transform:scaleX(0.9808)">Merge</div>
<div class="t" style="left:352.00px;top:91.02px;font-size:13.80px;color:#cfcfcf;-webkit-text-stroke-width:0.20px;transform:scaleX(0.9956)">Link</div>
<div class="t" style="left:408.40px;top:91.02px;font-size:13.80px;color:#cfcfcf;-webkit-text-stroke-width:0.20px;transform:scaleX(0.9888)">Shortcut</div>
<div class="t" style="left:490.47px;top:91.02px;font-size:13.80px;color:#cfcfcf;-webkit-text-stroke-width:0.20px;transform:scaleX(0.9590)">Connector</div>
<div class="t" style="left:74.40px;top:141.22px;font-size:13.80px;color:#d2d2d2;-webkit-text-stroke-width:0.20px;transform:scaleX(0.9394)">Extract From Category</div>
<div class="t" style="left:378.69px;top:144.62px;font-size:13.80px;color:#c2c2c2;-webkit-text-stroke-width:0.20px;transform:scaleX(0.9299)">Characters</div>
<div class="t" style="left:85.71px;top:201.42px;font-size:13.80px;color:#f4f4f4;-webkit-text-stroke-width:0.35px;transform:scaleX(0.9209)">Source Category</div>
<div class="t" style="left:224.40px;top:201.42px;font-size:13.80px;color:#f4f4f4;-webkit-text-stroke-width:0.35px;transform:scaleX(0.9521)">New Relationship</div>
<div class="t" style="left:434.60px;top:201.42px;font-size:13.80px;color:#f4f4f4;-webkit-text-stroke-width:0.35px;transform:scaleX(0.9525)">New Category</div>
<div class="t" style="left:85.50px;top:251.62px;font-size:13.80px;color:#a8a8a8;-webkit-text-stroke-width:0.20px;transform:scaleX(0.9286)">Characters</div>
<div class="t" style="left:233.19px;top:251.62px;font-size:13.80px;color:#ffffff;-webkit-text-stroke-width:0.30px;transform:scaleX(0.9074)">BELONGS_TO</div>
<div class="t" style="left:443.79px;top:251.62px;font-size:13.80px;color:#ffffff;-webkit-text-stroke-width:0.30px;transform:scaleX(0.9649)">House</div>
<div class="t" style="left:74.49px;top:320.02px;font-size:13.80px;color:#d2d2d2;-webkit-text-stroke-width:0.20px;transform:scaleX(0.9348)">Create Category From Property</div>
<div class="t" style="left:378.40px;top:323.22px;font-size:13.80px;color:#c2c2c2;-webkit-text-stroke-width:0.20px;transform:scaleX(0.9382)">houseName</div>
<div class="t" style="left:380.59px;top:365.22px;font-size:13.80px;color:#c8c8c8;-webkit-text-stroke-width:0.20px;transform:scaleX(0.9616)">Select All</div>
<div class="t" style="left:103.61px;top:430.02px;font-size:13.80px;color:#f4f4f4;-webkit-text-stroke-width:0.35px;transform:scaleX(0.9526)">characterIm</div>
<div class="t" style="left:84.64px;top:450.02px;font-size:13.80px;color:#f4f4f4;-webkit-text-stroke-width:0.35px;transform:scaleX(0.9029)">age</div>
<div class="t" style="left:217.43px;top:430.02px;font-size:13.80px;color:#f4f4f4;-webkit-text-stroke-width:0.35px;transform:scaleX(0.9296)">characterNa</div>
<div class="t" style="left:198.64px;top:450.02px;font-size:13.80px;color:#f4f4f4;-webkit-text-stroke-width:0.35px;transform:scaleX(0.9379)">me</div>
<div class="t" style="left:329.58px;top:430.02px;font-size:13.80px;color:#f4f4f4;-webkit-text-stroke-width:0.35px;transform:scaleX(0.9353)">houseName</div>
<div class="t" style="left:441.96px;top:430.02px;font-size:13.80px;color:#f4f4f4;-webkit-text-stroke-width:0.35px;transform:scaleX(0.9586)">killedBy</div>
<div class="t" style="left:554.15px;top:430.02px;font-size:13.80px;color:#f4f4f4;-webkit-text-stroke-width:0.35px;transform:scaleX(0.9754)">kills</div>
<div class="t" style="left:198.46px;top:493.02px;font-size:13.80px;color:#8e8e8e;-webkit-text-stroke-width:0.20px;transform:scaleX(0.9343)">Addam Marbra</div>
<div class="t" style="left:197.58px;top:512.82px;font-size:13.80px;color:#8e8e8e;-webkit-text-stroke-width:0.20px;transform:scaleX(1.0376)">nd</div>
<div class="t" style="left:536.41px;top:493.02px;font-size:13.80px;color:#8e8e8e;-webkit-text-stroke-width:0.20px;transform:scaleX(1.0358)">0</div>
<div class="t" style="left:85.69px;top:584.42px;font-size:13.80px;color:#f4f4f4;-webkit-text-stroke-width:0.35px;transform:scaleX(0.9408)">Selected Property</div>
<div class="t" style="left:228.60px;top:584.42px;font-size:13.80px;color:#f4f4f4;-webkit-text-stroke-width:0.35px;transform:scaleX(0.9557)">New Property Name</div>
<div class="t" style="left:389.22px;top:584.42px;font-size:13.80px;color:#f4f4f4;-webkit-text-stroke-width:0.35px;transform:scaleX(0.9321)">Key</div>
<div class="t" style="left:517.51px;top:584.42px;font-size:13.80px;color:#f4f4f4;-webkit-text-stroke-width:0.35px;transform:scaleX(0.9468)">Split</div>
<div class="t" style="left:102.40px;top:635.42px;font-size:13.80px;color:#a8a8a8;-webkit-text-stroke-width:0.20px;transform:scaleX(0.9361)">houseName</div>
<div class="t" style="left:237.60px;top:635.42px;font-size:13.80px;color:#ffffff;-webkit-text-stroke-width:0.30px;transform:scaleX(0.9392)">houseName</div>
<div class="t" style="left:123.13px;top:690.22px;font-size:13.80px;color:#d2d2d2;-webkit-text-stroke-width:0.20px;transform:scaleX(0.9525)">Inherit Relationship</div>
<div class="t" style="left:122.79px;top:723.42px;font-size:13.80px;color:#d2d2d2;-webkit-text-stroke-width:0.20px;transform:scaleX(0.9430)">Skip Empty(&quot;&quot;|null|undefined)</div>
<div class="t" style="left:85.60px;top:766.02px;font-size:13.80px;color:#c8c8c8;-webkit-text-stroke-width:0.20px;transform:scaleX(0.9062)">Run</div>
<div class="t" style="left:947.02px;top:26.02px;font-size:13.80px;color:#0a0a0a;-webkit-text-stroke-width:0.25px;transform:scaleX(0.9322)">Category</div>
<div class="t" style="left:1042.20px;top:26.02px;font-size:13.80px;color:#cccccc;-webkit-text-stroke-width:0.20px;transform:scaleX(0.9650)">Property</div>
<div class="t" style="left:1152.31px;top:26.02px;font-size:13.80px;color:#cccccc;-webkit-text-stroke-width:0.20px;transform:scaleX(0.8895)">Tag</div>
<div class="t" style="left:1220.20px;top:26.02px;font-size:13.80px;color:#0a0a0a;-webkit-text-stroke-width:0.25px;transform:scaleX(0.9372)">Relationship</div>
<div class="t" style="left:1159.27px;top:80.82px;font-size:13.80px;color:#20bcd4;-webkit-text-stroke-width:0.20px;transform:scaleX(0.9594)">Characters 0/387</div>
</body>
</html>
